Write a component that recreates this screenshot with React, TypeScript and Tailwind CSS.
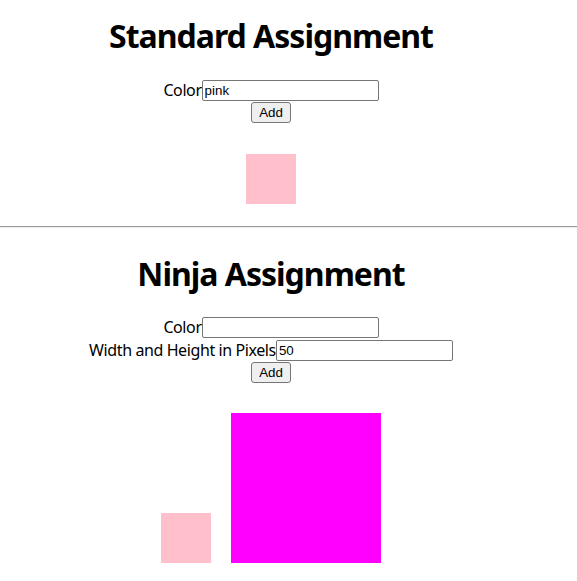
import * as React from "react"
import { useState } from "react"

interface Box {
  color: string
  size: number
}

const labelFont = { fontFamily: '"Noto Sans", "Open Sans", sans-serif' }

function Field({ label, value, onChange }: { label: string; value: string; onChange: (v: string) => void }) {
  return (
    <div className="flex h-[23px] items-center justify-center">
      <label className="text-[16px] leading-[21px] tracking-[-0.4px] text-black" style={labelFont}>
        {label}
      </label>
      <input
        type="text"
        value={value}
        onChange={(e) => onChange(e.target.value)}
        className="box-border h-[21px] w-[177px] rounded-[2px] border border-[#767676] bg-white px-[2px] text-[13.33px] text-black outline-none"
        style={{ fontFamily: '"Liberation Sans", Arial, sans-serif' }}
      />
    </div>
  )
}

function AddButton({ onClick }: { onClick: () => void }) {
  return (
    <button
      onClick={onClick}
      className="box-border h-[21px] w-[40px] rounded-[3px] border border-[#767676] bg-[#efefef] text-[13.33px] leading-[19px] text-black"
      style={{ fontFamily: '"Liberation Sans", Arial, sans-serif' }}
    >
      Add
    </button>
  )
}

export default function App() {
  const [stdColor, setStdColor] = useState("pink")
  const [stdBoxes, setStdBoxes] = useState<string[]>(["pink"])

  const [ninjaColor, setNinjaColor] = useState("")
  const [ninjaSize, setNinjaSize] = useState("50")
  const [ninjaBoxes, setNinjaBoxes] = useState<Box[]>([
    { color: "pink", size: 50 },
    { color: "magenta", size: 150 },
  ])

  return (
    <div className="w-[577px] bg-white text-black" style={labelFont}>
      {/* Standard */}
      <div className="flex w-[542px] flex-col items-center">
        <h1 className="mt-[14px] h-[44px] text-[32px] font-bold leading-[44px] tracking-[-1px]">Standard Assignment</h1>
        <div className="mt-[21px] flex flex-col items-center">
          <Field label="Color" value={stdColor} onChange={setStdColor} />
          <AddButton onClick={() => setStdBoxes([...stdBoxes, stdColor])} />
        </div>
        <div className="mt-[31px] mb-[22px] flex flex-wrap items-end justify-center gap-[20px]">
          {stdBoxes.map((c, i) => (
            <div key={i} className="h-[50px] w-[50px]" style={{ backgroundColor: c }} />
          ))}
        </div>
      </div>

      <hr className="border-0 border-t border-b border-t-[#9a9a9a] border-b-[#eeeeee]" />

      {/* Ninja */}
      <div className="flex w-[542px] flex-col items-center">
        <h1 className="mt-[24px] h-[44px] text-[32px] font-bold leading-[44px] tracking-[-1px]">Ninja Assignment</h1>
        <div className="mt-[20px] flex flex-col items-center">
          <Field label="Color" value={ninjaColor} onChange={setNinjaColor} />
          <Field label="Width and Height in Pixels" value={ninjaSize} onChange={setNinjaSize} />
          <AddButton
            onClick={() =>
              setNinjaBoxes([...ninjaBoxes, { color: ninjaColor, size: parseInt(ninjaSize) || 0 }])
            }
          />
        </div>
        <div className="mt-[30px] flex flex-wrap items-end justify-center gap-[20px]">
          {ninjaBoxes.map((b, i) => (
            <div key={i} style={{ backgroundColor: b.color, width: b.size, height: b.size }} />
          ))}
        </div>
      </div>
    </div>
  )
}
